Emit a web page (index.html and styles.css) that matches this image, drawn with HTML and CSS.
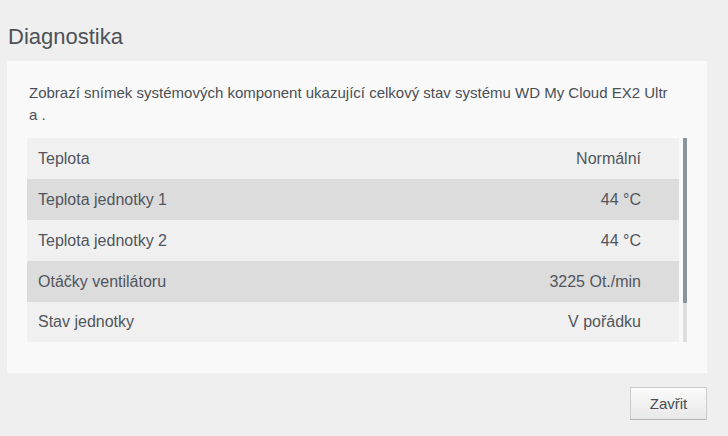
FILE: index.html
```html
<!DOCTYPE html>
<html lang="cs">
<head>
    <meta charset="UTF-8">
    <meta name="viewport" content="width=device-width, initial-scale=1.0">
    <title>Diagnostika</title>
    <link rel="stylesheet" href="styles.css">
</head>
<body>

    <h1>Diagnostika</h1>

    <div class="panel">
        <p class="popis">Zobrazí snímek systémových komponent ukazující celkový stav systému WD My Cloud EX2 Ultra .</p>

        <!-- Tabulka diagnostiky -->
        <div class="seznam">
            <div class="tabulka">
                <div class="radek">
                    <span>Teplota</span>
                    <span>Normální</span>
                </div>
                <div class="radek">
                    <span>Teplota jednotky 1</span>
                    <span>44 °C</span>
                </div>
                <div class="radek">
                    <span>Teplota jednotky 2</span>
                    <span>44 °C</span>
                </div>
                <div class="radek">
                    <span>Otáčky ventilátoru</span>
                    <span>3225 Ot./min</span>
                </div>
                <div class="radek">
                    <span>Stav jednotky</span>
                    <span>V pořádku</span>
                </div>
            </div>
            <div class="posuvnik">
                <div class="jezdec"></div>
            </div>
        </div>
    </div>

    <div class="tlacitka">
        <button class="zavrit">Zavřit</button>
    </div>

</body>
</html>
```

FILE: styles.css
```css
body {
    font-family: "Liberation Sans", Arial, sans-serif;
    margin: 0;
    padding: 0;
    background-color: #efefef;
    color: #50565c;
}

h1 {
    margin: 0;
    padding: 24px 8px 10px;
    font-size: 22px;
    line-height: 26px;
    font-weight: normal;
    color: #4d5257;
}

.panel {
    margin: 1px 21px 0 7px;
    padding: 21px 20px 31px;
    background-color: #f9f9f9;
}

.popis {
    margin: 0 14px 12px 0;
    padding-left: 2px;
    font-size: 15px;
    line-height: 22px;
    color: #4a4f55;
    word-break: break-all;
}

.seznam {
    display: flex;
    gap: 4px;
}

.tabulka {
    flex: 1;
}

.radek {
    display: flex;
    justify-content: space-between;
    align-items: center;
    height: 41px;
    padding: 0 38px 0 11px;
    font-size: 16px;
    background-color: #f0f0f0;
}

.radek:nth-child(even) {
    background-color: #dcdcdc;
}

.radek:last-child {
    height: 40px;
}

.posuvnik {
    width: 4px;
    background-color: #dedede;
}

.jezdec {
    height: 165px;
    background-color: #8a949c;
}

.tlacitka {
    display: flex;
    justify-content: flex-end;
    margin: 14px 21px 0 0;
}

.zavrit {
    width: 77px;
    height: 33px;
    padding: 0;
    font-family: "Liberation Sans", Arial, sans-serif;
    font-size: 15px;
    color: #474c52;
    background: linear-gradient(#fbfbfb, #e8e8e8);
    border: 1px solid #cbcbcb;
    border-bottom-color: #b5b5b5;
    border-radius: 0;
}
```
